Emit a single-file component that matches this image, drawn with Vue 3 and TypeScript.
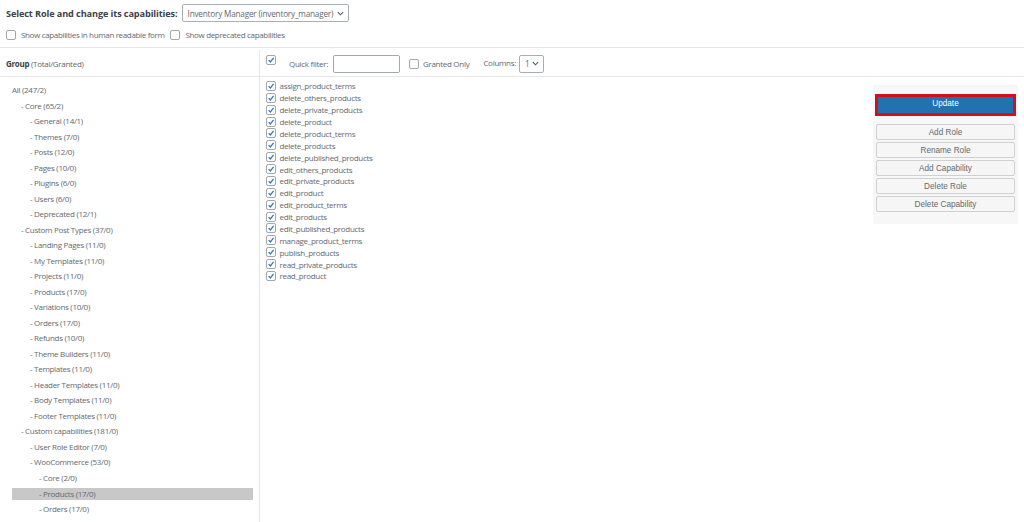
<script setup lang="ts">
interface TreeRow {
  label: string;
  level: number;
  active?: boolean;
}

const TREE: TreeRow[] = [
  { label: 'All (247/2)', level: 0 },
  { label: '- Core (65/2)', level: 1 },
  { label: '- General (14/1)', level: 2 },
  { label: '- Themes (7/0)', level: 2 },
  { label: '- Posts (12/0)', level: 2 },
  { label: '- Pages (10/0)', level: 2 },
  { label: '- Plugins (6/0)', level: 2 },
  { label: '- Users (6/0)', level: 2 },
  { label: '- Deprecated (12/1)', level: 2 },
  { label: '- Custom Post Types (37/0)', level: 1 },
  { label: '- Landing Pages (11/0)', level: 2 },
  { label: '- My Templates (11/0)', level: 2 },
  { label: '- Projects (11/0)', level: 2 },
  { label: '- Products (17/0)', level: 2 },
  { label: '- Variations (10/0)', level: 2 },
  { label: '- Orders (17/0)', level: 2 },
  { label: '- Refunds (10/0)', level: 2 },
  { label: '- Theme Builders (11/0)', level: 2 },
  { label: '- Templates (11/0)', level: 2 },
  { label: '- Header Templates (11/0)', level: 2 },
  { label: '- Body Templates (11/0)', level: 2 },
  { label: '- Footer Templates (11/0)', level: 2 },
  { label: '- Custom capabilities (181/0)', level: 1 },
  { label: '- User Role Editor (7/0)', level: 2 },
  { label: '- WooCommerce (53/0)', level: 2 },
  { label: '- Core (2/0)', level: 3 },
  { label: '- Products (17/0)', level: 3, active: true },
  { label: '- Orders (17/0)', level: 3 },
];

const CAPS = [
  'assign_product_terms',
  'delete_others_products',
  'delete_private_products',
  'delete_product',
  'delete_product_terms',
  'delete_products',
  'delete_published_products',
  'edit_others_products',
  'edit_private_products',
  'edit_product',
  'edit_product_terms',
  'edit_products',
  'edit_published_products',
  'manage_product_terms',
  'publish_products',
  'read_private_products',
  'read_product',
];

const ACTIONS = ['Add Role', 'Rename Role', 'Add Capability', 'Delete Role', 'Delete Capability'];
</script>

<template>
  <div class="page">
    <!-- Role picker -->
    <div class="role-row">
      <span class="role-title">Select Role and change its capabilities:</span>
      <div class="select role-select">
        <span>Inventory Manager (inventory_manager)</span>
        <svg class="chev" viewBox="0 0 8 5"><path d="M1 1l3 3 3-3" /></svg>
      </div>
    </div>
    <div class="options-row">
      <span class="box"></span>
      <span class="opt-label">Show capabilities in human readable form</span>
      <span class="box second"></span>
      <span class="opt-label">Show deprecated capabilities</span>
    </div>

    <div class="editor">
      <!-- Groups -->
      <div class="groups">
        <div class="groups-head"><b>Group</b> (Total/Granted)</div>
        <div class="tree">
          <div
            v-for="(row, i) in TREE"
            :key="i"
            class="tree-row"
            :class="[`lvl-${row.level}`, { active: row.active }]"
          >{{ row.label }}</div>
        </div>
      </div>

      <!-- Capabilities -->
      <div class="caps">
        <div class="toolbar">
          <span class="box checked all">
            <svg viewBox="0 0 10 10"><path d="M2 5.2l2.2 2.3L8.2 2.4" /></svg>
          </span>
          <span class="filter-label">Quick filter:</span>
          <span class="filter-input"></span>
          <span class="box granted"></span>
          <span class="granted-label">Granted Only</span>
          <span class="columns-label">Columns:</span>
          <div class="select columns-select">
            <span>1</span>
            <svg class="chev" viewBox="0 0 8 5"><path d="M1 1l3 3 3-3" /></svg>
          </div>
        </div>
        <div class="caps-body">
          <div class="cap-list">
            <div v-for="cap in CAPS" :key="cap" class="cap-row">
              <span class="box checked">
                <svg viewBox="0 0 10 10"><path d="M2 5.2l2.2 2.3L8.2 2.4" /></svg>
              </span>
              <span>{{ cap }}</span>
            </div>
          </div>
          <div class="side">
            <div class="update-wrap"><button class="update">Update</button></div>
            <button v-for="a in ACTIONS" :key="a" class="action">{{ a }}</button>
          </div>
        </div>
      </div>
    </div>
  </div>
</template>

<style scoped>
.page {
  width: 1024px;
  height: 522px;
  overflow: hidden;
  background: #fff;
  color: #646970;
  font-family: "Open Sans", "Noto Sans", sans-serif;
  font-size: 8px;
  letter-spacing: -0.29px;
  box-sizing: border-box;
}

.role-row {
  display: flex;
  align-items: center;
  height: 18px;
  padding: 4px 0 0 6px;
}
.role-title {
  font-size: 9.2px;
  font-weight: 700;
  color: #3c434a;
  margin-right: 4px;
  letter-spacing: -0.12px;
}

.select {
  display: flex;
  align-items: center;
  justify-content: space-between;
  height: 18px;
  box-sizing: border-box;
  border: 1px solid #a9aeb3;
  border-radius: 2px;
  background: #fff;
  padding: 0 4px 0 5px;
  white-space: nowrap;
}
.role-select { width: 167px; font-size: 8.2px; letter-spacing: -0.2px; }
.chev { width: 7px; height: 5px; flex: none; }
.chev path { fill: none; stroke: #50575e; stroke-width: 1.2; }

.options-row {
  display: flex;
  align-items: center;
  height: 13px;
  margin-top: 6px;
  padding-left: 6px;
}
.opt-label { margin-left: 5px; letter-spacing: -0.34px; }
.box {
  flex: none;
  display: block;
  width: 10px;
  height: 10px;
  box-sizing: border-box;
  border: 1px solid #a4a8ad;
  border-radius: 2px;
  background: #fff;
}
.box.second { margin-left: 6px; }
.box svg { display: block; width: 8px; height: 8px; }
.box svg path { fill: none; stroke: #2f7ab8; stroke-width: 1.6; }

.editor {
  display: flex;
  margin-top: 6px;
  height: 475px;
  border-top: 1px solid #e6e7e8;
}

.groups { width: 259px; flex: none; }
.groups-head {
  height: 28px;
  line-height: 32px;
  padding-left: 6px;
  border-bottom: 1px solid #e6e7e8;
}
.groups-head b { font-weight: 700; color: #3c434a; }

.tree { padding: 5px 6px 0 12px; }
.tree-row {
  height: 15.52px;
  line-height: 15.52px;
  white-space: nowrap;
}
.lvl-1 { padding-left: 9px; }
.lvl-2 { padding-left: 18px; }
.lvl-3 { padding-left: 27px; }
.tree-row.active { background: #c8c8c8; height: 12px; line-height: 12px; margin: 3px 0 0.52px; }

.caps {
  flex: 1;
  margin-top: 2px;
  border-left: 1px solid #e6e7e8;
}
.toolbar {
  display: flex;
  align-items: center;
  height: 27px;
  padding: 1px 0 0 6px;
  box-sizing: border-box;
  border-bottom: 1px solid #e6e7e8;
}
.box.all { margin-top: -7px; }
.filter-label { margin-left: 13px; }
.filter-input {
  width: 67px;
  height: 18px;
  margin-left: 5px;
  box-sizing: border-box;
  border: 1px solid #a4a8ad;
  border-radius: 2px;
}
.box.granted { margin-left: 9px; }
.granted-label { margin-left: 4px; }
.columns-label { margin-left: 14px; margin-top: -2px; }
.columns-select { width: 25px; margin-left: 3px; font-size: 8.4px; }

.caps-body {
  display: flex;
  justify-content: space-between;
  padding: 3px 6px 0 6px;
}
.cap-row {
  display: flex;
  align-items: center;
  gap: 3.5px;
  height: 11.875px;
  white-space: nowrap;
}

.side {
  width: 145px;
  height: 139px;
  box-sizing: border-box;
  margin-top: 5px;
  padding: 9px 2px 0;
  background: #f7f7f7;
  display: flex;
  flex-direction: column;
  align-items: center;
}
.update-wrap {
  width: 141px;
  height: 22px;
  box-sizing: border-box;
  border: 3px solid #d2101c;
  margin-bottom: 8px;
  flex: none;
}
.side button {
  font-family: "Liberation Sans", Arial, sans-serif;
  font-size: 8.2px;
  cursor: pointer;
}
.update {
  display: block;
  width: 100%;
  height: 100%;
  padding: 0 0 3px;
  border: none;
  background: #2271b1;
  color: #fff;
}
.action {
  flex: none;
  width: 139px;
  height: 16px;
  margin-bottom: 2.1px;
  padding: 0;
  border: 1px solid #d0d0d0;
  border-radius: 2px;
  background: #f6f6f6;
  color: #646970;
}
</style>
